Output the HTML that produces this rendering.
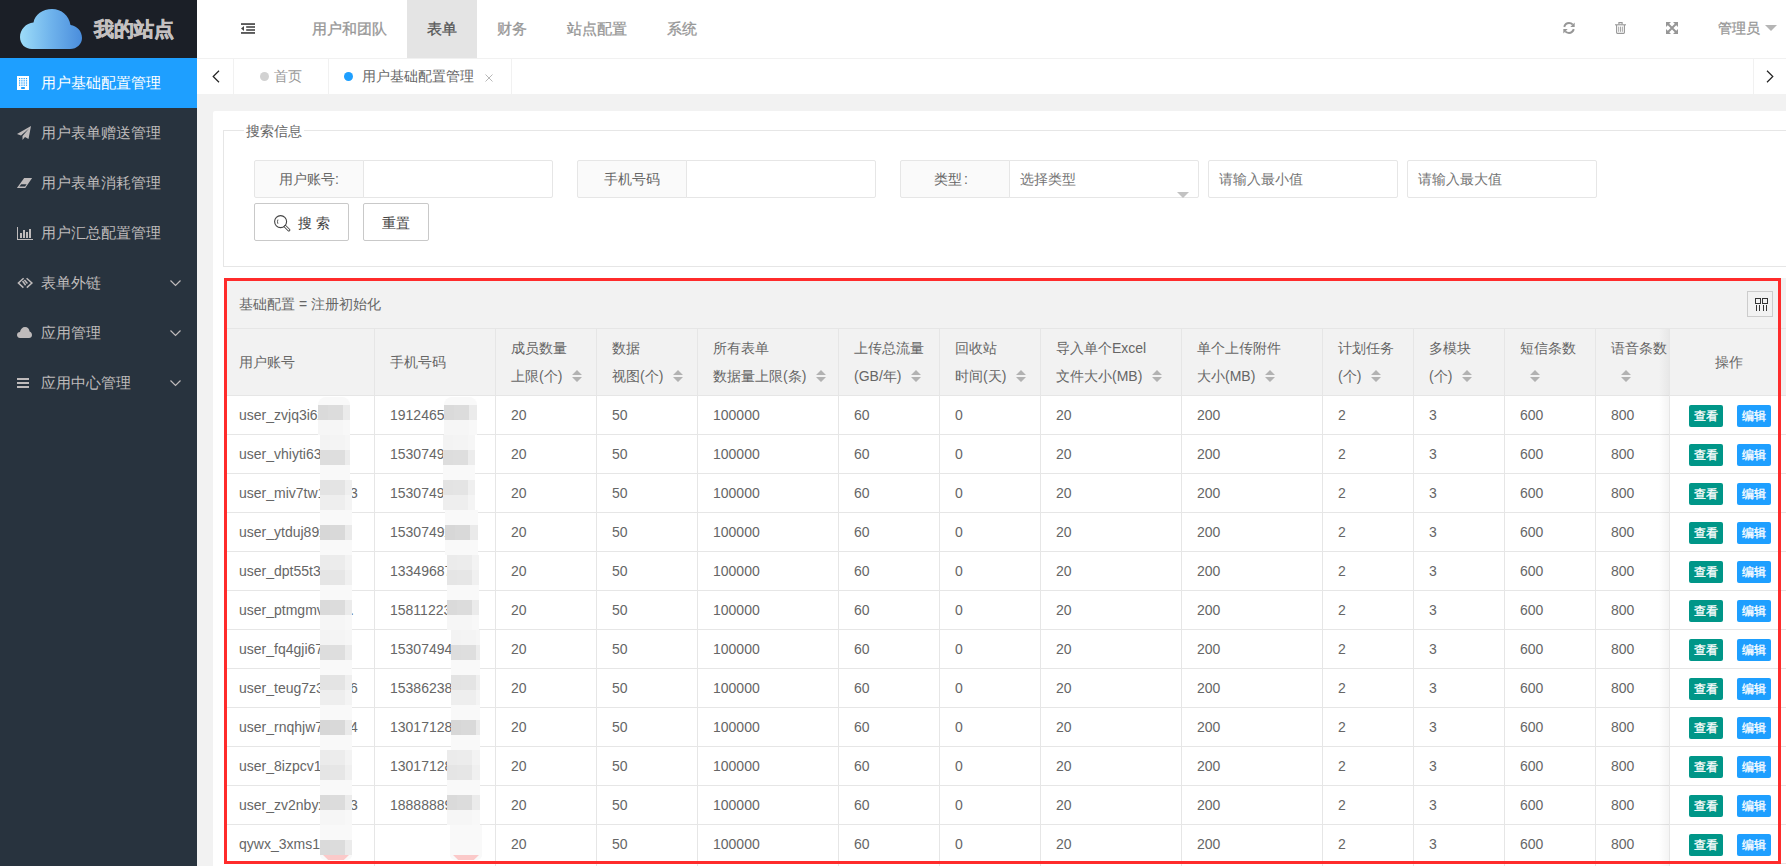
<!DOCTYPE html>
<html><head><meta charset="utf-8">
<style>
*{box-sizing:border-box;margin:0;padding:0}
html,body{width:1786px;height:866px;overflow:hidden}
body{font-family:"Liberation Sans",sans-serif;font-size:14px;color:#666;background:#f2f2f2;position:relative}
.abs{position:absolute}
#side{left:0;top:0;width:197px;height:866px;background:#28333e}
#logo{left:0;top:0;width:197px;height:58px;background:#1b1f27}
#logo .t{left:94px;top:14px;font-size:20px;font-weight:bold;color:#c4c0c0;line-height:30px;white-space:nowrap;-webkit-text-stroke:0.6px #c4c0c0}
.mi{left:0;width:197px;height:50px;color:#bfbbbb;font-size:15px}
.mi .tx{left:41px;top:0;line-height:50px;white-space:nowrap}
.mi.on{background:#1e9fff;color:#fff}
.mi svg{position:absolute}
#hdr{left:197px;top:0;width:1589px;height:58px;background:#fff}
.nv{top:0;height:58px;line-height:58px;font-size:14.6px;color:#979797;white-space:nowrap;-webkit-text-stroke:0.3px currentColor}
#tabs{left:197px;top:58px;width:1589px;height:36px;background:#fff;border-top:1px solid #f1f1f1}
#card{left:213px;top:111px;width:1600px;height:800px;background:#fff;border-radius:2px}
#fs{left:223px;top:130px;width:1600px;height:137px;border:1px solid #e6e6e6}
.lg{left:244px;top:122px;background:#fff;padding:0 2px;line-height:18px;color:#666;white-space:nowrap}
.lab{height:38px;border:1px solid #e6e6e6;background:#fafafa;line-height:36px;text-align:center;color:#666;border-radius:2px 0 0 2px}
.inp{height:38px;border:1px solid #e6e6e6;background:#fff;line-height:36px;color:#757575;padding-left:10px;border-radius:2px}
.btn{height:38px;border:1px solid #c9c9c9;background:#fff;line-height:38px;color:#444;text-align:center;border-radius:2px}
#tbl{left:224px;top:278px;width:1562px;height:590px;overflow:hidden;background:#fff}
#tool{left:0;top:0;width:1557px;height:50px;background:#f2f2f2}
.hl{position:absolute;left:0;height:1px;background:#e6e6e6}
.vl{position:absolute;width:1px;background:#e6e6e6}
.th{position:absolute;white-space:nowrap;line-height:28px;color:#666}
.td{position:absolute;white-space:nowrap;line-height:39px;color:#666}
.sort{display:inline-block;vertical-align:middle}
.bt{position:absolute;width:34px;height:22px;line-height:22px;font-size:12px;color:#fff;text-align:center;border-radius:2px;-webkit-text-stroke:0.3px #fff}
#red{left:224px;top:278px;width:1557px;height:586px;border:3px solid #ff2b2b;pointer-events:none}
</style></head><body>

<!-- sidebar -->
<div id="side" class="abs"></div>
<div id="logo" class="abs">
  <svg class="abs" style="left:20px;top:9px" width="62" height="40" viewBox="0 0 62 40">
    <defs><linearGradient id="cg" x1="0" x2="1" y1="0" y2="0"><stop offset="0" stop-color="#9ddcf8"/><stop offset="0.5" stop-color="#6fb3ec"/><stop offset="1" stop-color="#4a8ddc"/></linearGradient></defs>
    <path fill="url(#cg)" d="M12 40 C5 40 0 35 0 28 C0 20.5 6 14 13.5 13.5 C15 5.5 22.5 0 32 0 C41.5 0 49 6.5 50.5 16 C57 17 62 22 62 29 C62 35 57 40 50 40 Z"/>
  </svg>
  <div class="abs t">我的站点</div>
</div>

<div class="abs mi on" style="top:58px">
  <svg style="left:17px;top:18px" width="12" height="14" viewBox="0 0 12 14"><rect x="0" y="0" width="12" height="14" fill="#fff"/><g fill="#1e9fff"><rect x="2" y="2" width="1.2" height="1.2"/><rect x="4.3" y="2" width="1.2" height="1.2"/><rect x="6.6" y="2" width="1.2" height="1.2"/><rect x="8.9" y="2" width="1.2" height="1.2"/><rect x="2" y="4.2" width="1.2" height="1.2"/><rect x="4.3" y="4.2" width="1.2" height="1.2"/><rect x="6.6" y="4.2" width="1.2" height="1.2"/><rect x="8.9" y="4.2" width="1.2" height="1.2"/><rect x="2" y="6.4" width="1.2" height="1.2"/><rect x="4.3" y="6.4" width="1.2" height="1.2"/><rect x="6.6" y="6.4" width="1.2" height="1.2"/><rect x="8.9" y="6.4" width="1.2" height="1.2"/><rect x="2" y="8.6" width="1.2" height="1.2"/><rect x="4.3" y="8.6" width="1.2" height="1.2"/><rect x="6.6" y="8.6" width="1.2" height="1.2"/><rect x="8.9" y="8.6" width="1.2" height="1.2"/><rect x="4.2" y="11" width="3.6" height="2"/></g></svg>
  <div class="abs tx">用户基础配置管理</div>
</div>
<div class="abs mi" style="top:108px">
  <svg style="left:17px;top:18px" width="14" height="14" viewBox="0 0 14 14"><path fill="#bfbbbb" d="M14 0 L0 8 L4 9.5 L12 2.5 L5.5 10 L5.5 14 L8 11 L11.5 13 Z"/></svg>
  <div class="abs tx">用户表单赠送管理</div>
</div>
<div class="abs mi" style="top:158px">
  <svg style="left:14px;top:16px" width="22" height="18" viewBox="0 0 22 18"><path fill="#bfbbbb" d="M10.2 4 L18.1 4 L11.3 13.9 L2.9 13.9 Z"/><path fill="#28333e" d="M7.2 10.3 L12.6 10.3 L11 12.6 L5.4 12.6 Z"/></svg>
  <div class="abs tx">用户表单消耗管理</div>
</div>
<div class="abs mi" style="top:208px">
  <svg style="left:17px;top:19px" width="16" height="13" viewBox="0 0 16 13"><g fill="#bfbbbb"><rect x="0" y="0" width="1" height="13"/><rect x="0" y="12" width="16" height="1"/><rect x="3" y="6" width="2" height="5"/><rect x="6" y="3" width="2" height="8"/><rect x="9" y="5" width="2" height="6"/><rect x="12" y="2" width="2" height="9"/></g></svg>
  <div class="abs tx">用户汇总配置管理</div>
</div>
<div class="abs mi" style="top:258px">
  <svg style="left:14px;top:16px" width="22" height="18" viewBox="0 0 22 18"><g fill="none" stroke="#bfbbbb" stroke-width="1.5" stroke-linejoin="miter"><path d="M9.6 4.2 L4.4 9 L9.4 13.6"/><path d="M8.6 7 L11.6 11.2"/><path d="M12.6 4.2 L17.9 9 L12.8 13.6"/><path d="M10.4 6 L13.4 9.6"/></g></svg>
  <div class="abs tx">表单外链</div>
  <svg style="left:170px;top:22px" width="11" height="7" viewBox="0 0 11 7"><path d="M0.5 0.5 L5.5 5.5 L10.5 0.5" fill="none" stroke="#bfbbbb" stroke-width="1.2"/></svg>
</div>
<div class="abs mi" style="top:308px">
  <svg style="left:17px;top:19px" width="15" height="11" viewBox="0 0 15 11"><path fill="#bfbbbb" d="M3 11 C1 11 0 9.5 0 8 C0 6.3 1.2 5 3 5 C3.4 2 5.6 0 8 0 C10.6 0 12.4 2 12.6 4.6 C14 5 15 6.3 15 8 C15 9.7 13.7 11 12 11 Z"/></svg>
  <div class="abs tx">应用管理</div>
  <svg style="left:170px;top:22px" width="11" height="7" viewBox="0 0 11 7"><path d="M0.5 0.5 L5.5 5.5 L10.5 0.5" fill="none" stroke="#bfbbbb" stroke-width="1.2"/></svg>
</div>
<div class="abs mi" style="top:358px">
  <svg style="left:17px;top:20px" width="12" height="10" viewBox="0 0 12 10"><g fill="#bfbbbb"><rect x="0" y="0" width="12" height="2"/><rect x="0" y="4" width="12" height="2"/><rect x="0" y="8" width="12" height="2"/></g></svg>
  <div class="abs tx">应用中心管理</div>
  <svg style="left:170px;top:22px" width="11" height="7" viewBox="0 0 11 7"><path d="M0.5 0.5 L5.5 5.5 L10.5 0.5" fill="none" stroke="#bfbbbb" stroke-width="1.2"/></svg>
</div>

<!-- header -->
<div id="hdr" class="abs">
  <svg class="abs" style="left:44px;top:23px" width="14" height="11" viewBox="0 0 14 11"><g fill="#474747"><rect x="0" y="0.2" width="14" height="1.7"/><rect x="5.2" y="3.2" width="8.8" height="1.6"/><rect x="5.2" y="6.2" width="8.8" height="1.6"/><rect x="0" y="9.1" width="14" height="1.7"/><path d="M0 5.5 L3 3 L3 8 Z"/></g></svg>
  <div class="abs nv" style="left:115px">用户和团队</div>
  <div class="abs" style="left:210px;top:0;width:70px;height:58px;background:#e4e4e4"></div>
  <div class="abs nv" style="left:230px;color:#565656">表单</div>
  <div class="abs nv" style="left:300px">财务</div>
  <div class="abs nv" style="left:370px">站点配置</div>
  <div class="abs nv" style="left:470px">系统</div>
  <!-- right icons -->
  <svg class="abs" style="left:1366px;top:22px" width="13" height="13" viewBox="0 0 13 13"><g fill="none" stroke="#979797" stroke-width="2"><path d="M1.2 4.9 Q2.5 1.1 6 1.1 Q8.3 1.1 9.8 2.6"/><path d="M10.8 7.1 Q9.5 10.9 6 10.9 Q3.7 10.9 2.2 9.4"/></g><g fill="#979797"><path d="M11.7 0.4 V4.9 H7.3 Z"/><path d="M0.3 11.6 V7.1 H4.7 Z"/></g></svg>
  <svg class="abs" style="left:1418px;top:22px" width="11" height="12" viewBox="0 0 11 12"><g fill="none" stroke="#979797" stroke-width="1.1"><path d="M0 2.8 H11"/><path d="M3.9 2.6 V0.6 H7.1 V2.6"/><path d="M1.6 3 V10.6 Q1.6 11.4 2.4 11.4 H8.6 Q9.4 11.4 9.4 10.6 V3"/></g><g fill="#979797"><rect x="3.3" y="4.6" width="0.85" height="5.2"/><rect x="5.08" y="4.6" width="0.85" height="5.2"/><rect x="6.86" y="4.6" width="0.85" height="5.2"/></g></svg>
  <svg class="abs" style="left:1469px;top:22px" width="12" height="12" viewBox="0 0 12 12"><g fill="#979797"><path d="M0 0 H5 L0 5 Z"/><path d="M12 0 V5 L7 0 Z"/><path d="M0 12 V7 L5 12 Z"/><path d="M12 12 H7 L12 7 Z"/></g><path d="M1.5 1.5 L10.5 10.5 M10.5 1.5 L1.5 10.5" stroke="#979797" stroke-width="2"/></svg>
  <div class="abs nv" style="left:1521px;top:-1px;font-size:14px">管理员</div>
  <svg class="abs" style="left:1568px;top:25px" width="12" height="6" viewBox="0 0 12 6"><path d="M0 0 H12 L6 6 Z" fill="#b5b5b5"/></svg>
</div>

<!-- tabs -->
<div id="tabs" class="abs">
  <svg class="abs" style="left:15px;top:11px" width="8" height="13" viewBox="0 0 8 13"><path d="M7 0.8 L1.2 6.5 L7 12.2" fill="none" stroke="#222" stroke-width="1.2"/></svg>
  <div class="abs" style="left:36px;top:0;width:1px;height:35px;background:#f1f1f1"></div>
  <div class="abs" style="left:63px;top:13px;width:9px;height:9px;border-radius:50%;background:#d2d2d2"></div>
  <div class="abs" style="left:77px;top:0;line-height:35px;color:#999">首页</div>
  <div class="abs" style="left:131px;top:0;width:1px;height:35px;background:#f1f1f1"></div>
  <div class="abs" style="left:147px;top:13px;width:9px;height:9px;border-radius:50%;background:#1e9fff"></div>
  <div class="abs" style="left:165px;top:0;line-height:35px;color:#666">用户基础配置管理</div>
  <svg class="abs" style="left:288px;top:15px" width="8" height="8" viewBox="0 0 8 8"><path d="M0.5 0.5 L7.5 7.5 M7.5 0.5 L0.5 7.5" stroke="#b8b8b8" stroke-width="1"/></svg>
  <div class="abs" style="left:314px;top:0;width:1px;height:35px;background:#f1f1f1"></div>
  <div class="abs" style="left:1556px;top:0;width:1px;height:35px;background:#f1f1f1"></div>
  <svg class="abs" style="left:1569px;top:11px" width="8" height="13" viewBox="0 0 8 13"><path d="M1 0.8 L6.8 6.5 L1 12.2" fill="none" stroke="#222" stroke-width="1.2"/></svg>
</div>

<!-- card -->
<div id="card" class="abs"></div>
<div id="fs" class="abs"></div>
<div class="abs lg">搜索信息</div>

<div class="abs lab" style="left:254px;top:160px;width:110px">用户账号:</div>
<div class="abs inp" style="left:363px;top:160px;width:190px;border-radius:0 2px 2px 0"></div>
<div class="abs lab" style="left:577px;top:160px;width:110px">手机号码</div>
<div class="abs inp" style="left:686px;top:160px;width:190px;border-radius:0 2px 2px 0"></div>
<div class="abs lab" style="left:900px;top:160px;width:110px;text-align:left;padding-left:33px">类型<span style="margin-left:2px">:</span></div>
<div class="abs inp" style="left:1009px;top:160px;width:190px;border-radius:0 2px 2px 0">选择类型</div>
<svg class="abs" style="left:1177px;top:192px" width="12" height="6" viewBox="0 0 12 6"><path d="M0 0 H12 L6 6 Z" fill="#c2c2c2"/></svg>
<div class="abs inp" style="left:1208px;top:160px;width:190px">请输入最小值</div>
<div class="abs inp" style="left:1407px;top:160px;width:190px">请输入最大值</div>

<div class="abs btn" style="left:254px;top:203px;width:95px">
  <svg class="abs" style="left:19px;top:11px" width="17" height="17" viewBox="0 0 17 17"><g fill="none" stroke="#444"><circle cx="6.6" cy="6.6" r="6" stroke-width="1.1"/><path d="M3.9 4.6 Q3 6.6 3.9 8.8" stroke-width="0.9"/><path d="M11.3 11.5 L14.8 15" stroke-width="3" stroke-linecap="round"/></g><path d="M11.3 11.5 L14.8 15" stroke="#fff" stroke-width="1.1" stroke-linecap="round"/></svg>
  <span class="abs" style="left:43px;top:0">搜 索</span>
</div>
<div class="abs btn" style="left:363px;top:203px;width:66px">重置</div>

<!-- table -->
<div id="tbl" class="abs">
<div class="abs" style="left:0;top:0;width:1562px;height:117px;background:#f2f2f2"></div>
<div class="th" style="left:15px;top:12px">基础配置 = 注册初始化</div>
<div class="abs" style="left:1523px;top:13px;width:26px;height:26px;border:1px solid #ccc"></div>
<svg class="abs" style="left:1531px;top:20px" width="14" height="13" viewBox="0 0 14 13"><g fill="none" stroke="#333" stroke-width="1"><rect x="0.5" y="0.5" width="5" height="5"/><rect x="7.5" y="0.5" width="5" height="5"/></g><g fill="#333"><rect x="1" y="7" width="1" height="6"/><rect x="4" y="7" width="1" height="6"/><rect x="8" y="7" width="1" height="6"/><rect x="11" y="7" width="1" height="6"/></g></svg>
<div class="hl" style="top:50px;width:1562px"></div>
<div class="hl" style="top:117px;width:1562px"></div>
<div class="hl" style="top:156px;width:1562px"></div>
<div class="hl" style="top:195px;width:1562px"></div>
<div class="hl" style="top:234px;width:1562px"></div>
<div class="hl" style="top:273px;width:1562px"></div>
<div class="hl" style="top:312px;width:1562px"></div>
<div class="hl" style="top:351px;width:1562px"></div>
<div class="hl" style="top:390px;width:1562px"></div>
<div class="hl" style="top:429px;width:1562px"></div>
<div class="hl" style="top:468px;width:1562px"></div>
<div class="hl" style="top:507px;width:1562px"></div>
<div class="hl" style="top:546px;width:1562px"></div>
<div class="hl" style="top:585px;width:1562px"></div>
<div class="vl" style="left:150px;top:50px;height:540px"></div>
<div class="vl" style="left:271px;top:50px;height:540px"></div>
<div class="vl" style="left:372px;top:50px;height:540px"></div>
<div class="vl" style="left:473px;top:50px;height:540px"></div>
<div class="vl" style="left:614px;top:50px;height:540px"></div>
<div class="vl" style="left:715px;top:50px;height:540px"></div>
<div class="vl" style="left:816px;top:50px;height:540px"></div>
<div class="vl" style="left:957px;top:50px;height:540px"></div>
<div class="vl" style="left:1098px;top:50px;height:540px"></div>
<div class="vl" style="left:1189px;top:50px;height:540px"></div>
<div class="vl" style="left:1280px;top:50px;height:540px"></div>
<div class="vl" style="left:1371px;top:50px;height:540px"></div>
<div class="th" style="left:15px;top:70px">用户账号</div>
<div class="th" style="left:166px;top:70px">手机号码</div>
<div class="th" style="left:287px;top:56px">成员数量</div>
<div class="th" style="left:287px;top:84px">上限(个)<span class="sort" style="margin-left:10px"><svg width="10" height="12" viewBox="0 0 10 12"><path d="M0 5 L5 0 L10 5 Z M0 7 L10 7 L5 12 Z" fill="#b2b2b2"/></svg></span></div>
<div class="th" style="left:388px;top:56px">数据</div>
<div class="th" style="left:388px;top:84px">视图(个)<span class="sort" style="margin-left:10px"><svg width="10" height="12" viewBox="0 0 10 12"><path d="M0 5 L5 0 L10 5 Z M0 7 L10 7 L5 12 Z" fill="#b2b2b2"/></svg></span></div>
<div class="th" style="left:489px;top:56px">所有表单</div>
<div class="th" style="left:489px;top:84px">数据量上限(条)<span class="sort" style="margin-left:10px"><svg width="10" height="12" viewBox="0 0 10 12"><path d="M0 5 L5 0 L10 5 Z M0 7 L10 7 L5 12 Z" fill="#b2b2b2"/></svg></span></div>
<div class="th" style="left:630px;top:56px">上传总流量</div>
<div class="th" style="left:630px;top:84px">(GB/年)<span class="sort" style="margin-left:10px"><svg width="10" height="12" viewBox="0 0 10 12"><path d="M0 5 L5 0 L10 5 Z M0 7 L10 7 L5 12 Z" fill="#b2b2b2"/></svg></span></div>
<div class="th" style="left:731px;top:56px">回收站</div>
<div class="th" style="left:731px;top:84px">时间(天)<span class="sort" style="margin-left:10px"><svg width="10" height="12" viewBox="0 0 10 12"><path d="M0 5 L5 0 L10 5 Z M0 7 L10 7 L5 12 Z" fill="#b2b2b2"/></svg></span></div>
<div class="th" style="left:832px;top:56px">导入单个Excel</div>
<div class="th" style="left:832px;top:84px">文件大小(MB)<span class="sort" style="margin-left:10px"><svg width="10" height="12" viewBox="0 0 10 12"><path d="M0 5 L5 0 L10 5 Z M0 7 L10 7 L5 12 Z" fill="#b2b2b2"/></svg></span></div>
<div class="th" style="left:973px;top:56px">单个上传附件</div>
<div class="th" style="left:973px;top:84px">大小(MB)<span class="sort" style="margin-left:10px"><svg width="10" height="12" viewBox="0 0 10 12"><path d="M0 5 L5 0 L10 5 Z M0 7 L10 7 L5 12 Z" fill="#b2b2b2"/></svg></span></div>
<div class="th" style="left:1114px;top:56px">计划任务</div>
<div class="th" style="left:1114px;top:84px">(个)<span class="sort" style="margin-left:10px"><svg width="10" height="12" viewBox="0 0 10 12"><path d="M0 5 L5 0 L10 5 Z M0 7 L10 7 L5 12 Z" fill="#b2b2b2"/></svg></span></div>
<div class="th" style="left:1205px;top:56px">多模块</div>
<div class="th" style="left:1205px;top:84px">(个)<span class="sort" style="margin-left:10px"><svg width="10" height="12" viewBox="0 0 10 12"><path d="M0 5 L5 0 L10 5 Z M0 7 L10 7 L5 12 Z" fill="#b2b2b2"/></svg></span></div>
<div class="th" style="left:1296px;top:56px">短信条数</div>
<div class="th" style="left:1296px;top:84px"><span class="sort" style="margin-left:10px"><svg width="10" height="12" viewBox="0 0 10 12"><path d="M0 5 L5 0 L10 5 Z M0 7 L10 7 L5 12 Z" fill="#b2b2b2"/></svg></span></div>
<div class="th" style="left:1387px;top:56px">语音条数</div>
<div class="th" style="left:1387px;top:84px"><span class="sort" style="margin-left:10px"><svg width="10" height="12" viewBox="0 0 10 12"><path d="M0 5 L5 0 L10 5 Z M0 7 L10 7 L5 12 Z" fill="#b2b2b2"/></svg></span></div>
<div class="td" style="left:15px;top:118px;width:104px;overflow:hidden">user_zvjq3i6xx</div>
<div class="td" style="left:166px;top:118px;width:90px;overflow:hidden">1912465xxx</div>
<div class="td" style="left:287px;top:118px">20</div>
<div class="td" style="left:388px;top:118px">50</div>
<div class="td" style="left:489px;top:118px">100000</div>
<div class="td" style="left:630px;top:118px">60</div>
<div class="td" style="left:731px;top:118px">0</div>
<div class="td" style="left:832px;top:118px">20</div>
<div class="td" style="left:973px;top:118px">200</div>
<div class="td" style="left:1114px;top:118px">2</div>
<div class="td" style="left:1205px;top:118px">3</div>
<div class="td" style="left:1296px;top:118px">600</div>
<div class="td" style="left:1387px;top:118px">800</div>
<div class="td" style="left:15px;top:157px;width:104px;overflow:hidden">user_vhiyti63x</div>
<div class="td" style="left:166px;top:157px;width:90px;overflow:hidden">1530749xxx</div>
<div class="td" style="left:287px;top:157px">20</div>
<div class="td" style="left:388px;top:157px">50</div>
<div class="td" style="left:489px;top:157px">100000</div>
<div class="td" style="left:630px;top:157px">60</div>
<div class="td" style="left:731px;top:157px">0</div>
<div class="td" style="left:832px;top:157px">20</div>
<div class="td" style="left:973px;top:157px">200</div>
<div class="td" style="left:1114px;top:157px">2</div>
<div class="td" style="left:1205px;top:157px">3</div>
<div class="td" style="left:1296px;top:157px">600</div>
<div class="td" style="left:1387px;top:157px">800</div>
<div class="td" style="left:15px;top:196px;width:104px;overflow:hidden">user_miv7tw1xx</div>
<div class="td" style="left:126px;top:196px">3</div>
<div class="td" style="left:166px;top:196px;width:90px;overflow:hidden">1530749xxx</div>
<div class="td" style="left:287px;top:196px">20</div>
<div class="td" style="left:388px;top:196px">50</div>
<div class="td" style="left:489px;top:196px">100000</div>
<div class="td" style="left:630px;top:196px">60</div>
<div class="td" style="left:731px;top:196px">0</div>
<div class="td" style="left:832px;top:196px">20</div>
<div class="td" style="left:973px;top:196px">200</div>
<div class="td" style="left:1114px;top:196px">2</div>
<div class="td" style="left:1205px;top:196px">3</div>
<div class="td" style="left:1296px;top:196px">600</div>
<div class="td" style="left:1387px;top:196px">800</div>
<div class="td" style="left:15px;top:235px;width:104px;overflow:hidden">user_ytduj89xx</div>
<div class="td" style="left:166px;top:235px;width:90px;overflow:hidden">1530749xxx</div>
<div class="td" style="left:287px;top:235px">20</div>
<div class="td" style="left:388px;top:235px">50</div>
<div class="td" style="left:489px;top:235px">100000</div>
<div class="td" style="left:630px;top:235px">60</div>
<div class="td" style="left:731px;top:235px">0</div>
<div class="td" style="left:832px;top:235px">20</div>
<div class="td" style="left:973px;top:235px">200</div>
<div class="td" style="left:1114px;top:235px">2</div>
<div class="td" style="left:1205px;top:235px">3</div>
<div class="td" style="left:1296px;top:235px">600</div>
<div class="td" style="left:1387px;top:235px">800</div>
<div class="td" style="left:15px;top:274px;width:104px;overflow:hidden">user_dpt55t3xx</div>
<div class="td" style="left:166px;top:274px;width:90px;overflow:hidden">13349687xx</div>
<div class="td" style="left:287px;top:274px">20</div>
<div class="td" style="left:388px;top:274px">50</div>
<div class="td" style="left:489px;top:274px">100000</div>
<div class="td" style="left:630px;top:274px">60</div>
<div class="td" style="left:731px;top:274px">0</div>
<div class="td" style="left:832px;top:274px">20</div>
<div class="td" style="left:973px;top:274px">200</div>
<div class="td" style="left:1114px;top:274px">2</div>
<div class="td" style="left:1205px;top:274px">3</div>
<div class="td" style="left:1296px;top:274px">600</div>
<div class="td" style="left:1387px;top:274px">800</div>
<div class="td" style="left:15px;top:313px;width:104px;overflow:hidden">user_ptmgmvxxx</div>
<div class="td" style="left:126px;top:313px">.</div>
<div class="td" style="left:166px;top:313px;width:90px;overflow:hidden">15811223xx</div>
<div class="td" style="left:287px;top:313px">20</div>
<div class="td" style="left:388px;top:313px">50</div>
<div class="td" style="left:489px;top:313px">100000</div>
<div class="td" style="left:630px;top:313px">60</div>
<div class="td" style="left:731px;top:313px">0</div>
<div class="td" style="left:832px;top:313px">20</div>
<div class="td" style="left:973px;top:313px">200</div>
<div class="td" style="left:1114px;top:313px">2</div>
<div class="td" style="left:1205px;top:313px">3</div>
<div class="td" style="left:1296px;top:313px">600</div>
<div class="td" style="left:1387px;top:313px">800</div>
<div class="td" style="left:15px;top:352px;width:104px;overflow:hidden">user_fq4gji67x</div>
<div class="td" style="left:166px;top:352px;width:90px;overflow:hidden">15307494xx</div>
<div class="td" style="left:287px;top:352px">20</div>
<div class="td" style="left:388px;top:352px">50</div>
<div class="td" style="left:489px;top:352px">100000</div>
<div class="td" style="left:630px;top:352px">60</div>
<div class="td" style="left:731px;top:352px">0</div>
<div class="td" style="left:832px;top:352px">20</div>
<div class="td" style="left:973px;top:352px">200</div>
<div class="td" style="left:1114px;top:352px">2</div>
<div class="td" style="left:1205px;top:352px">3</div>
<div class="td" style="left:1296px;top:352px">600</div>
<div class="td" style="left:1387px;top:352px">800</div>
<div class="td" style="left:15px;top:391px;width:104px;overflow:hidden">user_teug7z3xx</div>
<div class="td" style="left:126px;top:391px">6</div>
<div class="td" style="left:166px;top:391px;width:90px;overflow:hidden">15386238xx</div>
<div class="td" style="left:287px;top:391px">20</div>
<div class="td" style="left:388px;top:391px">50</div>
<div class="td" style="left:489px;top:391px">100000</div>
<div class="td" style="left:630px;top:391px">60</div>
<div class="td" style="left:731px;top:391px">0</div>
<div class="td" style="left:832px;top:391px">20</div>
<div class="td" style="left:973px;top:391px">200</div>
<div class="td" style="left:1114px;top:391px">2</div>
<div class="td" style="left:1205px;top:391px">3</div>
<div class="td" style="left:1296px;top:391px">600</div>
<div class="td" style="left:1387px;top:391px">800</div>
<div class="td" style="left:15px;top:430px;width:104px;overflow:hidden">user_rnqhjw7xx</div>
<div class="td" style="left:126px;top:430px">4</div>
<div class="td" style="left:166px;top:430px;width:90px;overflow:hidden">13017128xx</div>
<div class="td" style="left:287px;top:430px">20</div>
<div class="td" style="left:388px;top:430px">50</div>
<div class="td" style="left:489px;top:430px">100000</div>
<div class="td" style="left:630px;top:430px">60</div>
<div class="td" style="left:731px;top:430px">0</div>
<div class="td" style="left:832px;top:430px">20</div>
<div class="td" style="left:973px;top:430px">200</div>
<div class="td" style="left:1114px;top:430px">2</div>
<div class="td" style="left:1205px;top:430px">3</div>
<div class="td" style="left:1296px;top:430px">600</div>
<div class="td" style="left:1387px;top:430px">800</div>
<div class="td" style="left:15px;top:469px;width:104px;overflow:hidden">user_8izpcv1xx</div>
<div class="td" style="left:166px;top:469px;width:90px;overflow:hidden">13017128xx</div>
<div class="td" style="left:287px;top:469px">20</div>
<div class="td" style="left:388px;top:469px">50</div>
<div class="td" style="left:489px;top:469px">100000</div>
<div class="td" style="left:630px;top:469px">60</div>
<div class="td" style="left:731px;top:469px">0</div>
<div class="td" style="left:832px;top:469px">20</div>
<div class="td" style="left:973px;top:469px">200</div>
<div class="td" style="left:1114px;top:469px">2</div>
<div class="td" style="left:1205px;top:469px">3</div>
<div class="td" style="left:1296px;top:469px">600</div>
<div class="td" style="left:1387px;top:469px">800</div>
<div class="td" style="left:15px;top:508px;width:104px;overflow:hidden">user_zv2nbyxxx</div>
<div class="td" style="left:126px;top:508px">3</div>
<div class="td" style="left:166px;top:508px;width:90px;overflow:hidden">18888889xx</div>
<div class="td" style="left:287px;top:508px">20</div>
<div class="td" style="left:388px;top:508px">50</div>
<div class="td" style="left:489px;top:508px">100000</div>
<div class="td" style="left:630px;top:508px">60</div>
<div class="td" style="left:731px;top:508px">0</div>
<div class="td" style="left:832px;top:508px">20</div>
<div class="td" style="left:973px;top:508px">200</div>
<div class="td" style="left:1114px;top:508px">2</div>
<div class="td" style="left:1205px;top:508px">3</div>
<div class="td" style="left:1296px;top:508px">600</div>
<div class="td" style="left:1387px;top:508px">800</div>
<div class="td" style="left:15px;top:547px;width:104px;overflow:hidden">qywx_3xms1xxx</div>
<div class="td" style="left:166px;top:547px;width:90px;overflow:hidden"></div>
<div class="td" style="left:287px;top:547px">20</div>
<div class="td" style="left:388px;top:547px">50</div>
<div class="td" style="left:489px;top:547px">100000</div>
<div class="td" style="left:630px;top:547px">60</div>
<div class="td" style="left:731px;top:547px">0</div>
<div class="td" style="left:832px;top:547px">20</div>
<div class="td" style="left:973px;top:547px">200</div>
<div class="td" style="left:1114px;top:547px">2</div>
<div class="td" style="left:1205px;top:547px">3</div>
<div class="td" style="left:1296px;top:547px">600</div>
<div class="td" style="left:1387px;top:547px">800</div>
<div class="abs" style="left:1435px;top:51px;width:12px;height:540px;background:linear-gradient(to left,rgba(0,0,0,.05),rgba(0,0,0,0))"></div>
<div class="abs" style="left:1445px;top:51px;width:117px;height:540px;background:#fff"></div>
<div class="abs" style="left:1445px;top:51px;width:117px;height:66px;background:#f2f2f2"></div>
<div class="hl" style="left:1445px;top:117px;width:117px"></div>
<div class="hl" style="left:1445px;top:156px;width:117px"></div>
<div class="hl" style="left:1445px;top:195px;width:117px"></div>
<div class="hl" style="left:1445px;top:234px;width:117px"></div>
<div class="hl" style="left:1445px;top:273px;width:117px"></div>
<div class="hl" style="left:1445px;top:312px;width:117px"></div>
<div class="hl" style="left:1445px;top:351px;width:117px"></div>
<div class="hl" style="left:1445px;top:390px;width:117px"></div>
<div class="hl" style="left:1445px;top:429px;width:117px"></div>
<div class="hl" style="left:1445px;top:468px;width:117px"></div>
<div class="hl" style="left:1445px;top:507px;width:117px"></div>
<div class="hl" style="left:1445px;top:546px;width:117px"></div>
<div class="hl" style="left:1445px;top:585px;width:117px"></div>
<div class="vl" style="left:1445px;top:50px;height:540px"></div>
<div class="th" style="left:1445px;width:120px;text-align:center;top:70px">操作</div>
<div class="bt" style="left:1465px;top:127px;background:#009688">查看</div>
<div class="bt" style="left:1513px;top:127px;background:#1e9fff">编辑</div>
<div class="bt" style="left:1465px;top:166px;background:#009688">查看</div>
<div class="bt" style="left:1513px;top:166px;background:#1e9fff">编辑</div>
<div class="bt" style="left:1465px;top:205px;background:#009688">查看</div>
<div class="bt" style="left:1513px;top:205px;background:#1e9fff">编辑</div>
<div class="bt" style="left:1465px;top:244px;background:#009688">查看</div>
<div class="bt" style="left:1513px;top:244px;background:#1e9fff">编辑</div>
<div class="bt" style="left:1465px;top:283px;background:#009688">查看</div>
<div class="bt" style="left:1513px;top:283px;background:#1e9fff">编辑</div>
<div class="bt" style="left:1465px;top:322px;background:#009688">查看</div>
<div class="bt" style="left:1513px;top:322px;background:#1e9fff">编辑</div>
<div class="bt" style="left:1465px;top:361px;background:#009688">查看</div>
<div class="bt" style="left:1513px;top:361px;background:#1e9fff">编辑</div>
<div class="bt" style="left:1465px;top:400px;background:#009688">查看</div>
<div class="bt" style="left:1513px;top:400px;background:#1e9fff">编辑</div>
<div class="bt" style="left:1465px;top:439px;background:#009688">查看</div>
<div class="bt" style="left:1513px;top:439px;background:#1e9fff">编辑</div>
<div class="bt" style="left:1465px;top:478px;background:#009688">查看</div>
<div class="bt" style="left:1513px;top:478px;background:#1e9fff">编辑</div>
<div class="bt" style="left:1465px;top:517px;background:#009688">查看</div>
<div class="bt" style="left:1513px;top:517px;background:#1e9fff">编辑</div>
<div class="bt" style="left:1465px;top:556px;background:#009688">查看</div>
<div class="bt" style="left:1513px;top:556px;background:#1e9fff">编辑</div>
</div><!--/tbl-->
<div class="abs" style="left:318px;top:397px;width:32px;height:8px;background:#f9f9f9;border-radius:15px 15px 0 0;overflow:hidden">
</div>
<div class="abs" style="left:318px;top:405px;width:32px;height:15px;background:#f9f9f9;overflow:hidden">
<div class="abs" style="left:0px;top:0;width:10px;height:15px;background:rgb(218,218,218)"></div>
<div class="abs" style="left:10px;top:0;width:15px;height:15px;background:rgb(220,220,220)"></div>
<div class="abs" style="left:25px;top:0;width:7px;height:15px;background:rgb(235,235,235)"></div>
</div>
<div class="abs" style="left:318px;top:420px;width:32px;height:15px;background:#f9f9f9;overflow:hidden">
<div class="abs" style="left:0px;top:0;width:10px;height:15px;background:rgb(246,246,246)"></div>
<div class="abs" style="left:10px;top:0;width:15px;height:15px;background:rgb(246,246,246)"></div>
<div class="abs" style="left:25px;top:0;width:7px;height:15px;background:rgb(248,248,248)"></div>
</div>
<div class="abs" style="left:320px;top:435px;width:30px;height:15px;background:#f9f9f9;overflow:hidden">
<div class="abs" style="left:0px;top:0;width:10px;height:15px;background:rgb(243,243,243)"></div>
<div class="abs" style="left:10px;top:0;width:15px;height:15px;background:rgb(244,244,244)"></div>
<div class="abs" style="left:25px;top:0;width:5px;height:15px;background:rgb(246,246,246)"></div>
</div>
<div class="abs" style="left:320px;top:450px;width:30px;height:15px;background:#f9f9f9;overflow:hidden">
<div class="abs" style="left:0px;top:0;width:10px;height:15px;background:rgb(221,221,221)"></div>
<div class="abs" style="left:10px;top:0;width:15px;height:15px;background:rgb(222,222,222)"></div>
<div class="abs" style="left:25px;top:0;width:5px;height:15px;background:rgb(236,236,236)"></div>
</div>
<div class="abs" style="left:320px;top:465px;width:30px;height:15px;background:#f9f9f9;overflow:hidden">
</div>
<div class="abs" style="left:320px;top:480px;width:32px;height:15px;background:#f9f9f9;overflow:hidden">
<div class="abs" style="left:0px;top:0;width:10px;height:15px;background:rgb(227,227,227)"></div>
<div class="abs" style="left:10px;top:0;width:15px;height:15px;background:rgb(228,228,228)"></div>
<div class="abs" style="left:25px;top:0;width:7px;height:15px;background:rgb(239,239,239)"></div>
</div>
<div class="abs" style="left:320px;top:495px;width:32px;height:15px;background:#f9f9f9;overflow:hidden">
<div class="abs" style="left:0px;top:0;width:10px;height:15px;background:rgb(238,238,238)"></div>
<div class="abs" style="left:10px;top:0;width:15px;height:15px;background:rgb(238,238,238)"></div>
<div class="abs" style="left:25px;top:0;width:7px;height:15px;background:rgb(244,244,244)"></div>
</div>
<div class="abs" style="left:320px;top:510px;width:32px;height:15px;background:#f9f9f9;overflow:hidden">
</div>
<div class="abs" style="left:320px;top:525px;width:32px;height:15px;background:#f9f9f9;overflow:hidden">
<div class="abs" style="left:0px;top:0;width:10px;height:15px;background:rgb(215,215,215)"></div>
<div class="abs" style="left:10px;top:0;width:15px;height:15px;background:rgb(217,217,217)"></div>
<div class="abs" style="left:25px;top:0;width:7px;height:15px;background:rgb(234,234,234)"></div>
</div>
<div class="abs" style="left:320px;top:540px;width:32px;height:15px;background:#f9f9f9;overflow:hidden">
</div>
<div class="abs" style="left:320px;top:555px;width:32px;height:15px;background:#f9f9f9;overflow:hidden">
<div class="abs" style="left:0px;top:0;width:10px;height:15px;background:rgb(235,235,235)"></div>
<div class="abs" style="left:10px;top:0;width:15px;height:15px;background:rgb(236,236,236)"></div>
<div class="abs" style="left:25px;top:0;width:7px;height:15px;background:rgb(243,243,243)"></div>
</div>
<div class="abs" style="left:320px;top:570px;width:32px;height:15px;background:#f9f9f9;overflow:hidden">
<div class="abs" style="left:0px;top:0;width:10px;height:15px;background:rgb(229,229,229)"></div>
<div class="abs" style="left:10px;top:0;width:15px;height:15px;background:rgb(230,230,230)"></div>
<div class="abs" style="left:25px;top:0;width:7px;height:15px;background:rgb(240,240,240)"></div>
</div>
<div class="abs" style="left:320px;top:585px;width:32px;height:15px;background:#f9f9f9;overflow:hidden">
</div>
<div class="abs" style="left:320px;top:600px;width:32px;height:15px;background:#f9f9f9;overflow:hidden">
<div class="abs" style="left:0px;top:0;width:10px;height:15px;background:rgb(218,218,218)"></div>
<div class="abs" style="left:10px;top:0;width:15px;height:15px;background:rgb(220,220,220)"></div>
<div class="abs" style="left:25px;top:0;width:7px;height:15px;background:rgb(235,235,235)"></div>
</div>
<div class="abs" style="left:320px;top:615px;width:32px;height:15px;background:#f9f9f9;overflow:hidden">
<div class="abs" style="left:0px;top:0;width:10px;height:15px;background:rgb(246,246,246)"></div>
<div class="abs" style="left:10px;top:0;width:15px;height:15px;background:rgb(246,246,246)"></div>
<div class="abs" style="left:25px;top:0;width:7px;height:15px;background:rgb(248,248,248)"></div>
</div>
<div class="abs" style="left:320px;top:630px;width:32px;height:15px;background:#f9f9f9;overflow:hidden">
<div class="abs" style="left:0px;top:0;width:10px;height:15px;background:rgb(243,243,243)"></div>
<div class="abs" style="left:10px;top:0;width:15px;height:15px;background:rgb(244,244,244)"></div>
<div class="abs" style="left:25px;top:0;width:7px;height:15px;background:rgb(246,246,246)"></div>
</div>
<div class="abs" style="left:320px;top:645px;width:32px;height:15px;background:#f9f9f9;overflow:hidden">
<div class="abs" style="left:0px;top:0;width:10px;height:15px;background:rgb(221,221,221)"></div>
<div class="abs" style="left:10px;top:0;width:15px;height:15px;background:rgb(222,222,222)"></div>
<div class="abs" style="left:25px;top:0;width:7px;height:15px;background:rgb(236,236,236)"></div>
</div>
<div class="abs" style="left:320px;top:660px;width:32px;height:15px;background:#f9f9f9;overflow:hidden">
</div>
<div class="abs" style="left:320px;top:675px;width:32px;height:15px;background:#f9f9f9;overflow:hidden">
<div class="abs" style="left:0px;top:0;width:10px;height:15px;background:rgb(227,227,227)"></div>
<div class="abs" style="left:10px;top:0;width:15px;height:15px;background:rgb(228,228,228)"></div>
<div class="abs" style="left:25px;top:0;width:7px;height:15px;background:rgb(239,239,239)"></div>
</div>
<div class="abs" style="left:320px;top:690px;width:32px;height:15px;background:#f9f9f9;overflow:hidden">
<div class="abs" style="left:0px;top:0;width:10px;height:15px;background:rgb(238,238,238)"></div>
<div class="abs" style="left:10px;top:0;width:15px;height:15px;background:rgb(238,238,238)"></div>
<div class="abs" style="left:25px;top:0;width:7px;height:15px;background:rgb(244,244,244)"></div>
</div>
<div class="abs" style="left:320px;top:705px;width:32px;height:15px;background:#f9f9f9;overflow:hidden">
</div>
<div class="abs" style="left:320px;top:720px;width:32px;height:15px;background:#f9f9f9;overflow:hidden">
<div class="abs" style="left:0px;top:0;width:10px;height:15px;background:rgb(215,215,215)"></div>
<div class="abs" style="left:10px;top:0;width:15px;height:15px;background:rgb(217,217,217)"></div>
<div class="abs" style="left:25px;top:0;width:7px;height:15px;background:rgb(234,234,234)"></div>
</div>
<div class="abs" style="left:320px;top:735px;width:32px;height:15px;background:#f9f9f9;overflow:hidden">
</div>
<div class="abs" style="left:320px;top:750px;width:32px;height:15px;background:#f9f9f9;overflow:hidden">
<div class="abs" style="left:0px;top:0;width:10px;height:15px;background:rgb(235,235,235)"></div>
<div class="abs" style="left:10px;top:0;width:15px;height:15px;background:rgb(236,236,236)"></div>
<div class="abs" style="left:25px;top:0;width:7px;height:15px;background:rgb(243,243,243)"></div>
</div>
<div class="abs" style="left:320px;top:765px;width:32px;height:15px;background:#f9f9f9;overflow:hidden">
<div class="abs" style="left:0px;top:0;width:10px;height:15px;background:rgb(229,229,229)"></div>
<div class="abs" style="left:10px;top:0;width:15px;height:15px;background:rgb(230,230,230)"></div>
<div class="abs" style="left:25px;top:0;width:7px;height:15px;background:rgb(240,240,240)"></div>
</div>
<div class="abs" style="left:320px;top:780px;width:32px;height:15px;background:#f9f9f9;overflow:hidden">
</div>
<div class="abs" style="left:320px;top:795px;width:32px;height:15px;background:#f9f9f9;overflow:hidden">
<div class="abs" style="left:0px;top:0;width:10px;height:15px;background:rgb(218,218,218)"></div>
<div class="abs" style="left:10px;top:0;width:15px;height:15px;background:rgb(220,220,220)"></div>
<div class="abs" style="left:25px;top:0;width:7px;height:15px;background:rgb(235,235,235)"></div>
</div>
<div class="abs" style="left:320px;top:810px;width:32px;height:15px;background:#f9f9f9;overflow:hidden">
<div class="abs" style="left:0px;top:0;width:10px;height:15px;background:rgb(246,246,246)"></div>
<div class="abs" style="left:10px;top:0;width:15px;height:15px;background:rgb(246,246,246)"></div>
<div class="abs" style="left:25px;top:0;width:7px;height:15px;background:rgb(248,248,248)"></div>
</div>
<div class="abs" style="left:320px;top:825px;width:32px;height:15px;background:#f9f9f9;overflow:hidden">
</div>
<div class="abs" style="left:320px;top:840px;width:32px;height:15px;background:#f9f9f9;overflow:hidden">
<div class="abs" style="left:0px;top:0;width:10px;height:15px;background:rgb(218,218,218)"></div>
<div class="abs" style="left:10px;top:0;width:15px;height:15px;background:rgb(220,220,220)"></div>
<div class="abs" style="left:25px;top:0;width:7px;height:15px;background:rgb(235,235,235)"></div>
</div>
<div class="abs" style="left:320px;top:855px;width:32px;height:5px;background:#f9f9f9;border-radius:0 0 12px 12px;overflow:hidden">
<div class="abs" style="left:3px;top:0px;width:26px;height:5px;background:#fbc9c9;clip-path:polygon(0 0,100% 0,80% 100%,20% 100%)"></div>
</div>
<div class="abs" style="left:444px;top:397px;width:33px;height:8px;background:#f9f9f9;border-radius:15px 15px 0 0;overflow:hidden">
</div>
<div class="abs" style="left:444px;top:405px;width:33px;height:15px;background:#f9f9f9;overflow:hidden">
<div class="abs" style="left:0px;top:0;width:10px;height:15px;background:rgb(218,218,218)"></div>
<div class="abs" style="left:10px;top:0;width:15px;height:15px;background:rgb(220,220,220)"></div>
<div class="abs" style="left:25px;top:0;width:8px;height:15px;background:rgb(235,235,235)"></div>
</div>
<div class="abs" style="left:444px;top:420px;width:33px;height:15px;background:#f9f9f9;overflow:hidden">
<div class="abs" style="left:0px;top:0;width:10px;height:15px;background:rgb(246,246,246)"></div>
<div class="abs" style="left:10px;top:0;width:15px;height:15px;background:rgb(246,246,246)"></div>
<div class="abs" style="left:25px;top:0;width:8px;height:15px;background:rgb(248,248,248)"></div>
</div>
<div class="abs" style="left:443px;top:435px;width:32px;height:15px;background:#f9f9f9;overflow:hidden">
<div class="abs" style="left:0px;top:0;width:10px;height:15px;background:rgb(243,243,243)"></div>
<div class="abs" style="left:10px;top:0;width:15px;height:15px;background:rgb(244,244,244)"></div>
<div class="abs" style="left:25px;top:0;width:7px;height:15px;background:rgb(246,246,246)"></div>
</div>
<div class="abs" style="left:443px;top:450px;width:32px;height:15px;background:#f9f9f9;overflow:hidden">
<div class="abs" style="left:0px;top:0;width:10px;height:15px;background:rgb(221,221,221)"></div>
<div class="abs" style="left:10px;top:0;width:15px;height:15px;background:rgb(222,222,222)"></div>
<div class="abs" style="left:25px;top:0;width:7px;height:15px;background:rgb(236,236,236)"></div>
</div>
<div class="abs" style="left:443px;top:465px;width:32px;height:15px;background:#f9f9f9;overflow:hidden">
</div>
<div class="abs" style="left:443px;top:480px;width:32px;height:15px;background:#f9f9f9;overflow:hidden">
<div class="abs" style="left:0px;top:0;width:10px;height:15px;background:rgb(227,227,227)"></div>
<div class="abs" style="left:10px;top:0;width:15px;height:15px;background:rgb(228,228,228)"></div>
<div class="abs" style="left:25px;top:0;width:7px;height:15px;background:rgb(239,239,239)"></div>
</div>
<div class="abs" style="left:443px;top:495px;width:32px;height:15px;background:#f9f9f9;overflow:hidden">
<div class="abs" style="left:0px;top:0;width:10px;height:15px;background:rgb(238,238,238)"></div>
<div class="abs" style="left:10px;top:0;width:15px;height:15px;background:rgb(238,238,238)"></div>
<div class="abs" style="left:25px;top:0;width:7px;height:15px;background:rgb(244,244,244)"></div>
</div>
<div class="abs" style="left:445px;top:510px;width:33px;height:15px;background:#f9f9f9;overflow:hidden">
</div>
<div class="abs" style="left:445px;top:525px;width:33px;height:15px;background:#f9f9f9;overflow:hidden">
<div class="abs" style="left:0px;top:0;width:10px;height:15px;background:rgb(215,215,215)"></div>
<div class="abs" style="left:10px;top:0;width:15px;height:15px;background:rgb(217,217,217)"></div>
<div class="abs" style="left:25px;top:0;width:8px;height:15px;background:rgb(234,234,234)"></div>
</div>
<div class="abs" style="left:445px;top:540px;width:33px;height:15px;background:#f9f9f9;overflow:hidden">
</div>
<div class="abs" style="left:447px;top:555px;width:32px;height:15px;background:#f9f9f9;overflow:hidden">
<div class="abs" style="left:0px;top:0;width:10px;height:15px;background:rgb(235,235,235)"></div>
<div class="abs" style="left:10px;top:0;width:15px;height:15px;background:rgb(236,236,236)"></div>
<div class="abs" style="left:25px;top:0;width:7px;height:15px;background:rgb(243,243,243)"></div>
</div>
<div class="abs" style="left:447px;top:570px;width:32px;height:15px;background:#f9f9f9;overflow:hidden">
<div class="abs" style="left:0px;top:0;width:10px;height:15px;background:rgb(229,229,229)"></div>
<div class="abs" style="left:10px;top:0;width:15px;height:15px;background:rgb(230,230,230)"></div>
<div class="abs" style="left:25px;top:0;width:7px;height:15px;background:rgb(240,240,240)"></div>
</div>
<div class="abs" style="left:447px;top:585px;width:32px;height:15px;background:#f9f9f9;overflow:hidden">
</div>
<div class="abs" style="left:447px;top:600px;width:32px;height:15px;background:#f9f9f9;overflow:hidden">
<div class="abs" style="left:0px;top:0;width:10px;height:15px;background:rgb(218,218,218)"></div>
<div class="abs" style="left:10px;top:0;width:15px;height:15px;background:rgb(220,220,220)"></div>
<div class="abs" style="left:25px;top:0;width:7px;height:15px;background:rgb(235,235,235)"></div>
</div>
<div class="abs" style="left:447px;top:615px;width:32px;height:15px;background:#f9f9f9;overflow:hidden">
<div class="abs" style="left:0px;top:0;width:10px;height:15px;background:rgb(246,246,246)"></div>
<div class="abs" style="left:10px;top:0;width:15px;height:15px;background:rgb(246,246,246)"></div>
<div class="abs" style="left:25px;top:0;width:7px;height:15px;background:rgb(248,248,248)"></div>
</div>
<div class="abs" style="left:451px;top:630px;width:29px;height:15px;background:#f9f9f9;overflow:hidden">
<div class="abs" style="left:0px;top:0;width:10px;height:15px;background:rgb(243,243,243)"></div>
<div class="abs" style="left:10px;top:0;width:15px;height:15px;background:rgb(244,244,244)"></div>
<div class="abs" style="left:25px;top:0;width:4px;height:15px;background:rgb(246,246,246)"></div>
</div>
<div class="abs" style="left:451px;top:645px;width:29px;height:15px;background:#f9f9f9;overflow:hidden">
<div class="abs" style="left:0px;top:0;width:10px;height:15px;background:rgb(221,221,221)"></div>
<div class="abs" style="left:10px;top:0;width:15px;height:15px;background:rgb(222,222,222)"></div>
<div class="abs" style="left:25px;top:0;width:4px;height:15px;background:rgb(236,236,236)"></div>
</div>
<div class="abs" style="left:451px;top:660px;width:29px;height:15px;background:#f9f9f9;overflow:hidden">
</div>
<div class="abs" style="left:451px;top:675px;width:29px;height:15px;background:#f9f9f9;overflow:hidden">
<div class="abs" style="left:0px;top:0;width:10px;height:15px;background:rgb(227,227,227)"></div>
<div class="abs" style="left:10px;top:0;width:15px;height:15px;background:rgb(228,228,228)"></div>
<div class="abs" style="left:25px;top:0;width:4px;height:15px;background:rgb(239,239,239)"></div>
</div>
<div class="abs" style="left:451px;top:690px;width:29px;height:15px;background:#f9f9f9;overflow:hidden">
<div class="abs" style="left:0px;top:0;width:10px;height:15px;background:rgb(238,238,238)"></div>
<div class="abs" style="left:10px;top:0;width:15px;height:15px;background:rgb(238,238,238)"></div>
<div class="abs" style="left:25px;top:0;width:4px;height:15px;background:rgb(244,244,244)"></div>
</div>
<div class="abs" style="left:451px;top:705px;width:29px;height:15px;background:#f9f9f9;overflow:hidden">
</div>
<div class="abs" style="left:451px;top:720px;width:29px;height:15px;background:#f9f9f9;overflow:hidden">
<div class="abs" style="left:0px;top:0;width:10px;height:15px;background:rgb(215,215,215)"></div>
<div class="abs" style="left:10px;top:0;width:15px;height:15px;background:rgb(217,217,217)"></div>
<div class="abs" style="left:25px;top:0;width:4px;height:15px;background:rgb(234,234,234)"></div>
</div>
<div class="abs" style="left:451px;top:735px;width:29px;height:15px;background:#f9f9f9;overflow:hidden">
</div>
<div class="abs" style="left:447px;top:750px;width:33px;height:15px;background:#f9f9f9;overflow:hidden">
<div class="abs" style="left:0px;top:0;width:10px;height:15px;background:rgb(235,235,235)"></div>
<div class="abs" style="left:10px;top:0;width:15px;height:15px;background:rgb(236,236,236)"></div>
<div class="abs" style="left:25px;top:0;width:8px;height:15px;background:rgb(243,243,243)"></div>
</div>
<div class="abs" style="left:447px;top:765px;width:33px;height:15px;background:#f9f9f9;overflow:hidden">
<div class="abs" style="left:0px;top:0;width:10px;height:15px;background:rgb(229,229,229)"></div>
<div class="abs" style="left:10px;top:0;width:15px;height:15px;background:rgb(230,230,230)"></div>
<div class="abs" style="left:25px;top:0;width:8px;height:15px;background:rgb(240,240,240)"></div>
</div>
<div class="abs" style="left:447px;top:780px;width:33px;height:15px;background:#f9f9f9;overflow:hidden">
</div>
<div class="abs" style="left:447px;top:795px;width:33px;height:15px;background:#f9f9f9;overflow:hidden">
<div class="abs" style="left:0px;top:0;width:10px;height:15px;background:rgb(218,218,218)"></div>
<div class="abs" style="left:10px;top:0;width:15px;height:15px;background:rgb(220,220,220)"></div>
<div class="abs" style="left:25px;top:0;width:8px;height:15px;background:rgb(235,235,235)"></div>
</div>
<div class="abs" style="left:447px;top:810px;width:33px;height:15px;background:#f9f9f9;overflow:hidden">
<div class="abs" style="left:0px;top:0;width:10px;height:15px;background:rgb(246,246,246)"></div>
<div class="abs" style="left:10px;top:0;width:15px;height:15px;background:rgb(246,246,246)"></div>
<div class="abs" style="left:25px;top:0;width:8px;height:15px;background:rgb(248,248,248)"></div>
</div>
<div class="abs" style="left:450px;top:825px;width:32px;height:15px;background:#f9f9f9;overflow:hidden">
</div>
<div class="abs" style="left:450px;top:840px;width:32px;height:15px;background:#f9f9f9;overflow:hidden">
</div>
<div class="abs" style="left:450px;top:855px;width:32px;height:5px;background:#f9f9f9;border-radius:0 0 12px 12px;overflow:hidden">
<div class="abs" style="left:3px;top:0px;width:26px;height:5px;background:#fbc9c9;clip-path:polygon(0 0,100% 0,80% 100%,20% 100%)"></div>
</div>
<!--/strips-->
<div id="red" class="abs"></div>
</body></html>
